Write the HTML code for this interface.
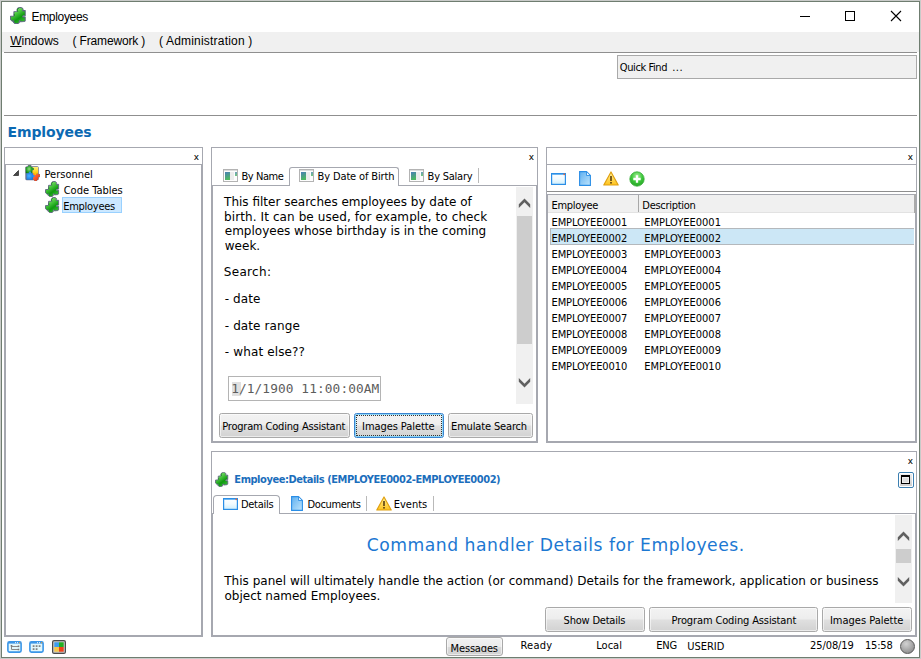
<!DOCTYPE html>
<html>
<head>
<meta charset="utf-8">
<title>Employees</title>
<style>
*{box-sizing:border-box;margin:0;padding:0}
html,body{width:921px;height:659px;overflow:hidden;background:#fff}
body{font-family:"DejaVu Sans Condensed","DejaVu Sans","Liberation Sans",sans-serif;font-stretch:condensed;font-size:11px;color:#000;position:relative}
.a{position:absolute}
.t{position:absolute;white-space:nowrap;line-height:14px}
.ui{font-family:"Liberation Sans",sans-serif;font-stretch:normal;font-size:12px}
.vd{font-family:"DejaVu Sans","Liberation Sans",sans-serif;font-stretch:normal;font-size:12px;line-height:15px}
.mono{font-family:"DejaVu Sans Mono","Liberation Mono",monospace;font-stretch:normal}
.btn{position:absolute;border:1px solid #a9a9a9;border-radius:2.5px;box-shadow:inset 0 0 0 1px rgba(255,255,255,.55);background:linear-gradient(#f3f3f3 0%,#ededed 46%,#dfdfdf 54%,#d2d2d2 100%);height:25px}
.panel{position:absolute;border:1px solid #a6a8b0;background:#fff}
.x{position:absolute;font-family:"Liberation Sans",sans-serif;font-stretch:normal;font-size:9.5px;line-height:10px;color:#000;-webkit-text-stroke:.1px #000}
.sb{position:absolute;background:#f0f0f0}
.sep{position:absolute;width:1px;background:#b9b9b9}
</style>
</head>
<body>

<div class="a" style="left:0;top:0;width:921px;height:659px;border:1px solid #c9cbc9"></div>
<div class="a" style="left:1px;top:1px;width:919px;height:657px;border:1px solid #6f7d70"></div>

<svg class="a" style="left:9.7px;top:7.4px" width="17.9" height="17.1" viewBox="0 0 16 16" preserveAspectRatio="none"><defs><linearGradient id="g1" x1="0.200" y1="0" x2="0.800" y2="1"><stop offset="0" stop-color="#a5e898"/><stop offset=".35" stop-color="#4cc840"/><stop offset=".65" stop-color="#0f9a10"/><stop offset="1" stop-color="#3cc038"/></linearGradient></defs><path d="M3.500 4.400L6.900 4.100C6 3.200 5.900 .6 9 .5C12.100 .4 12 3 11.200 3.600L13.600 3.300V8.100L11.700 8.300C11.200 8.700 11.300 9.400 11.800 9.400L13.600 9.300V12.900L12.800 13.500L9.400 13.900L8.900 12.700L8.200 13.200L8.300 14.600L7 15.500L4.500 15.600L3.100 14.200L3.500 12.900L2.300 13.400L.5 11.700L.5 8.600L3.500 8.400Z" fill="url(#g1)" stroke="#5d6480" stroke-width=".9" stroke-linejoin="round"/><path d="M6.900 4.300C6.300 3 6.600 1.600 7.800 1.200" stroke="#0d8a10" stroke-width=".8" fill="none"/><path d="M3.900 8.300V6.500" stroke="#1a8a1a" stroke-width=".8"/></svg>
<span class="t ui" style="left:31.50px;top:9.80px;letter-spacing:-0.315px;">Employees</span>
<div class="a" style="left:800px;top:16px;width:10px;height:1px;background:#000"></div>
<div class="a" style="left:845px;top:11px;width:10px;height:10px;border:1px solid #000"></div>
<svg class="a" style="left:890px;top:10px" width="12" height="12" viewBox="0 0 12 12"><path d="M1 1L11 11M11 1L1 11" stroke="#000" stroke-width="1.100" fill="none"/></svg>

<div class="a" style="left:2px;top:32px;width:917px;height:20px;background:#f0f0f0"></div>
<span class="t ui" style="left:10.20px;top:33.90px;"><u>W</u>indows</span>
<span class="t ui" style="left:72.60px;top:33.90px;letter-spacing:-0.172px;">( Framework )</span>
<span class="t ui" style="left:158.91px;top:33.90px;letter-spacing:0.201px;">( Administration )</span>
<div class="a" style="left:4px;top:52px;width:913px;height:1px;background:#8f8f8f"></div>
<div class="a" style="left:617px;top:55px;width:300px;height:24px;background:#f0f0f0;border:1px solid #a9a9a9"></div>
<span class="t " style="left:619.80px;top:60.60px;letter-spacing:-0.400px;">Quick Find</span>
<span class="t " style="left:672.16px;top:60.60px;letter-spacing:0.540px;">...</span>
<div class="a" style="left:4px;top:115px;width:913px;height:1px;background:#8f8f8f"></div>
<span class="t " style="left:7.48px;top:122.71px;letter-spacing:-0.101px;font-family:'DejaVu Sans','Liberation Sans',sans-serif;font-stretch:normal;font-size:14px;line-height:18px;font-weight:bold;color:#0b69b3">Employees</span>
<div class="panel" style="left:4px;top:147px;width:199px;height:490px"></div>
<div class="a" style="left:5px;top:164px;width:197px;height:472px;border:1px solid #a6a8b0"></div>
<span class="x" style="left:194px;top:151.500px">x</span>
<svg class="a" style="left:11.500px;top:169px" width="8" height="8" viewBox="0 0 8 8"><path d="M6.500 1.500V6.500H1.500Z" fill="#484848" stroke="#333" stroke-width=".8"/></svg>

<svg class="a" style="left:25px;top:165px" width="15" height="16" viewBox="0 0 16 17"><defs>
<radialGradient id="pg1" cx=".5" cy=".45" r=".6"><stop offset="0" stop-color="#8fe080"/><stop offset=".6" stop-color="#2fa82f"/><stop offset="1" stop-color="#0b7a12"/></radialGradient>
<linearGradient id="pg2" x1="0" y1="0" x2="0" y2="1"><stop offset="0" stop-color="#fff27a"/><stop offset="1" stop-color="#ffc400"/></linearGradient>
<radialGradient id="pg3" cx=".4" cy=".4" r=".7"><stop offset="0" stop-color="#49b0ff"/><stop offset="1" stop-color="#1677dd"/></radialGradient>
<linearGradient id="pg4" x1="0" y1="0" x2="1" y2="1"><stop offset="0" stop-color="#ff7a4a"/><stop offset="1" stop-color="#f22c06"/></linearGradient></defs>
<g stroke="#6c6f8c" stroke-width="1.300" stroke-linejoin="round" fill="#6c6f8c"><rect x="1" y="2" width="13" height="13.600" rx="1"/><circle cx="4.800" cy="1.700" r="1.600"/><circle cx="14.600" cy="11.300" r="1.300"/><circle cx="11.300" cy="15.600" r="1.100"/></g>
<path d="M.8 2H3.200A1.600 1.600 0 1 1 6.400 2H8V8.800H.8Z" fill="url(#pg1)"/>
<path d="M8 2H14V9.300H8V5.600A1.300 1.300 0 0 0 8 3Z" fill="url(#pg2)"/>
<circle cx="8.200" cy="4.300" r="1.300" fill="#2a9a2c"/>
<circle cx="11" cy="9.500" r="1.400" fill="#ffc400"/>
<path d="M1.600 8.800H8.600V15.600H1.600Z" fill="url(#pg3)"/>
<circle cx="5.400" cy="8.400" r="1.400" fill="#2a8df0"/>
<path d="M8.600 9.300H9.600A1.400 1.400 0 0 0 12.400 9.300H14V10.200A1.300 1.300 0 1 1 14 12.400V15.600H12.300A1.100 1.100 0 1 1 10.300 15.600H8.600V13A1.300 1.300 0 0 0 8.600 10.600Z" fill="url(#pg4)"/>
<circle cx="9" cy="11.800" r="1.200" fill="#2b94f2"/>
</svg>
<span class="t " style="left:44.50px;top:168.00px;">Personnel</span>
<svg class="a" style="left:45px;top:181px" width="16" height="16" viewBox="0 0 16 16" preserveAspectRatio="none"><defs><linearGradient id="g2" x1="0.200" y1="0" x2="0.800" y2="1"><stop offset="0" stop-color="#a5e898"/><stop offset=".35" stop-color="#4cc840"/><stop offset=".65" stop-color="#0f9a10"/><stop offset="1" stop-color="#3cc038"/></linearGradient></defs><path d="M3.500 4.400L6.900 4.100C6 3.200 5.900 .6 9 .5C12.100 .4 12 3 11.200 3.600L13.600 3.300V8.100L11.700 8.300C11.200 8.700 11.300 9.400 11.800 9.400L13.600 9.300V12.900L12.800 13.500L9.400 13.900L8.900 12.700L8.200 13.200L8.300 14.600L7 15.500L4.500 15.600L3.100 14.200L3.500 12.900L2.300 13.400L.5 11.700L.5 8.600L3.500 8.400Z" fill="url(#g2)" stroke="#5d6480" stroke-width=".9" stroke-linejoin="round"/><path d="M6.900 4.300C6.300 3 6.600 1.600 7.800 1.200" stroke="#0d8a10" stroke-width=".8" fill="none"/><path d="M3.900 8.300V6.500" stroke="#1a8a1a" stroke-width=".8"/></svg>
<span class="t " style="left:63.70px;top:184.00px;">Code Tables</span>
<svg class="a" style="left:45px;top:197px" width="16" height="16" viewBox="0 0 16 16" preserveAspectRatio="none"><defs><linearGradient id="g3" x1="0.200" y1="0" x2="0.800" y2="1"><stop offset="0" stop-color="#a5e898"/><stop offset=".35" stop-color="#4cc840"/><stop offset=".65" stop-color="#0f9a10"/><stop offset="1" stop-color="#3cc038"/></linearGradient></defs><path d="M3.500 4.400L6.900 4.100C6 3.200 5.900 .6 9 .5C12.100 .4 12 3 11.200 3.600L13.600 3.300V8.100L11.700 8.300C11.200 8.700 11.300 9.400 11.800 9.400L13.600 9.300V12.900L12.800 13.500L9.400 13.900L8.900 12.700L8.200 13.200L8.300 14.600L7 15.500L4.500 15.600L3.100 14.200L3.500 12.900L2.300 13.400L.5 11.700L.5 8.600L3.500 8.400Z" fill="url(#g3)" stroke="#5d6480" stroke-width=".9" stroke-linejoin="round"/><path d="M6.900 4.300C6.300 3 6.600 1.600 7.800 1.200" stroke="#0d8a10" stroke-width=".8" fill="none"/><path d="M3.900 8.300V6.500" stroke="#1a8a1a" stroke-width=".8"/></svg>
<div class="a" style="left:62px;top:197px;width:60px;height:16px;background:#cce8ff;border:1px solid #99d1ff"></div>
<span class="t " style="left:63.16px;top:200.00px;letter-spacing:-0.259px;">Employees</span>
<div class="panel" style="left:211px;top:147px;width:327px;height:296px"></div>
<span class="x" style="left:529px;top:151.500px">x</span>
<div class="a" style="left:212px;top:185px;width:325px;height:257px;border:1px solid #a6a8b0;background:#fff"></div>
<div class="a" style="left:289px;top:167px;width:110px;height:19px;border:1px solid #a6a8b0;border-bottom:none;background:#fff;border-radius:3px 3px 0 0"></div>
<svg class="a" style="left:223px;top:169px" width="15" height="13" viewBox="0 0 15 13"><defs><linearGradient id="tg1" x1="0" y1="0" x2="0.300" y2="1"><stop offset="0" stop-color="#4a7db8"/><stop offset="1" stop-color="#4db860"/></linearGradient></defs><rect x=".5" y=".5" width="14" height="12" fill="#fdfdfd" stroke="#b3b3b3"/><rect x="1" y="1" width="13" height="1" fill="#dcdcdc"/><rect x="2" y="3" width="5" height="8" fill="url(#tg1)"/><rect x="7" y="3" width="4" height="8" fill="#ececec"/><rect x="12" y="3" width="2" height="4" fill="url(#tg1)" opacity=".8"/></svg>
<span class="t " style="left:241.50px;top:169.80px;letter-spacing:-0.435px;">By Name</span>
<svg class="a" style="left:299px;top:169px" width="15" height="13" viewBox="0 0 15 13"><defs><linearGradient id="tg2" x1="0" y1="0" x2="0.300" y2="1"><stop offset="0" stop-color="#4a7db8"/><stop offset="1" stop-color="#4db860"/></linearGradient></defs><rect x=".5" y=".5" width="14" height="12" fill="#fdfdfd" stroke="#b3b3b3"/><rect x="1" y="1" width="13" height="1" fill="#dcdcdc"/><rect x="2" y="3" width="5" height="8" fill="url(#tg2)"/><rect x="7" y="3" width="4" height="8" fill="#ececec"/><rect x="12" y="3" width="2" height="4" fill="url(#tg2)" opacity=".8"/></svg>
<span class="t " style="left:317.60px;top:169.80px;letter-spacing:-0.138px;">By Date of Birth</span>
<svg class="a" style="left:409px;top:169px" width="15" height="13" viewBox="0 0 15 13"><defs><linearGradient id="tg3" x1="0" y1="0" x2="0.300" y2="1"><stop offset="0" stop-color="#4a7db8"/><stop offset="1" stop-color="#4db860"/></linearGradient></defs><rect x=".5" y=".5" width="14" height="12" fill="#fdfdfd" stroke="#b3b3b3"/><rect x="1" y="1" width="13" height="1" fill="#dcdcdc"/><rect x="2" y="3" width="5" height="8" fill="url(#tg3)"/><rect x="7" y="3" width="4" height="8" fill="#ececec"/><rect x="12" y="3" width="2" height="4" fill="url(#tg3)" opacity=".8"/></svg>
<span class="t " style="left:427.60px;top:169.80px;letter-spacing:-0.236px;">By Salary</span>
<div class="sep" style="left:478px;top:168px;height:15px"></div>
<span class="t vd" style="left:224.10px;top:195.00px;">This filter searches employees by date of</span>
<span class="t vd" style="left:224.10px;top:210.00px;letter-spacing:0.092px;">birth. It can be used, for example, to check</span>
<span class="t vd" style="left:224.80px;top:224.00px;">employees whose birthday is in the coming</span>
<span class="t vd" style="left:224.80px;top:239.00px;">week.</span>
<span class="t vd" style="left:223.72px;top:264.50px;letter-spacing:0.330px;">Search:</span>
<span class="t vd" style="left:224.80px;top:292.00px;letter-spacing:0.072px;">- date</span>
<span class="t vd" style="left:224.80px;top:319.00px;letter-spacing:0.098px;">- date range</span>
<span class="t vd" style="left:224.80px;top:345.00px;letter-spacing:0.134px;">- what else??</span>
<div class="sb" style="left:516px;top:187px;width:17px;height:217px"></div>
<div class="a" style="left:517px;top:216px;width:15px;height:128px;background:#cdcdcd"></div>
<svg class="a" style="left:516px;top:197px" width="17" height="12" viewBox="0 0 17 12"><path d="M2.800 7.300L8.500 1.600L14.200 7.300V10.900L8.500 5.200L2.800 10.900Z" fill="#606060"/></svg>
<svg class="a" style="left:516px;top:377px" width="17" height="12" viewBox="0 0 17 12"><path d="M2.800 4.700L8.500 10.400L14.200 4.700V1.100L8.500 6.800L2.800 1.100Z" fill="#606060"/></svg>
<div class="a" style="left:228px;top:376px;width:153px;height:25px;border:1px solid #b4b4b4;background:#fff"></div>
<div class="a" style="left:232px;top:381.500px;width:8.500px;height:14.500px;background:#e0e0e0"></div>
<span class="t mono" style="left:231.14px;top:381.00px;letter-spacing:0.100px;font-size:12.8px;line-height:15px;color:#5c5c5c">1/1/1900 11:00:00AM</span>
<div class="btn" style="left:219px;top:413px;width:131px;"></div>
<span class="t " style="left:222.16px;top:420.00px;letter-spacing:-0.188px;">Program Coding Assistant</span>
<div class="btn" style="left:354px;top:413px;width:90px;border-color:#3a84d0;box-shadow:inset 0 0 0 1px #8ed6f8;"></div>
<div class="a" style="left:356px;top:415px;width:86px;height:21px;border:1px dotted #333"></div>
<span class="t " style="left:362.10px;top:420.00px;letter-spacing:-0.076px;">Images Palette</span>
<div class="btn" style="left:448px;top:413px;width:85px;"></div>
<span class="t " style="left:451.04px;top:420.00px;letter-spacing:-0.153px;">Emulate Search</span>
<div class="panel" style="left:546px;top:147px;width:371px;height:296px"></div>
<span class="x" style="left:908px;top:151.500px">x</span>
<div class="a" style="left:547px;top:164px;width:369px;height:1px;background:#a6a8b0"></div>
<div class="a" style="left:547px;top:191px;width:369px;height:1px;background:#8e8e8e"></div>
<svg class="a" style="left:551px;top:173px" width="15" height="12" viewBox="0 0 15 12"><defs><linearGradient id="dg1" x1="0" y1="0" x2="0" y2="1"><stop offset="0" stop-color="#ffffff"/><stop offset=".5" stop-color="#f2fbff"/><stop offset="1" stop-color="#cdeefd"/></linearGradient></defs><rect x=".6" y=".6" width="13.800" height="10.800" fill="url(#dg1)" stroke="#2b8ee6" stroke-width="1.200"/><rect x="1" y="1" width="13" height="1" fill="#6db6f2"/><rect x="12.500" y=".6" width="1.500" height="1.500" fill="#e8663a"/></svg>
<svg class="a" style="left:579px;top:170.7px" width="12" height="15" viewBox="0 0 12 15"><defs><linearGradient id="og2" x1="0" y1="0" x2="1" y2="1"><stop offset="0" stop-color="#5fb0f0"/><stop offset="1" stop-color="#bfe4fc"/></linearGradient></defs><path d="M.6 .6H7.500L11.400 4.500V14.400H.6Z" fill="url(#og2)" stroke="#2b8ee6" stroke-width="1.100"/><path d="M7.500 .6V4.500H11.400Z" fill="#e9f5fe" stroke="#2b8ee6" stroke-width=".9" stroke-linejoin="round"/></svg>
<svg class="a" style="left:603px;top:171px" width="16" height="15" viewBox="0 0 16 15"><defs><linearGradient id="eg3" x1="0" y1="0" x2="0" y2="1"><stop offset="0" stop-color="#fff3a0"/><stop offset="1" stop-color="#ffc21a"/></linearGradient></defs><path d="M8 1L15.200 14H.8Z" fill="url(#eg3)" stroke="#e0a010" stroke-width="1.200" stroke-linejoin="round"/><rect x="7.200" y="5" width="1.600" height="5" fill="#5a3d10"/><rect x="7.200" y="11" width="1.600" height="1.600" fill="#5a3d10"/></svg>
<svg class="a" style="left:629px;top:171px" width="16" height="16" viewBox="0 0 16 16"><defs><radialGradient id="plg" cx=".5" cy=".3" r=".7"><stop offset="0" stop-color="#a8f09a"/><stop offset=".55" stop-color="#3cc63a"/><stop offset="1" stop-color="#27a427"/></radialGradient></defs><circle cx="8" cy="8" r="7.200" fill="url(#plg)" stroke="#3cb03c" stroke-width=".8"/><path d="M8 4.300V11.700M4.300 8H11.700" stroke="#fff" stroke-width="2.300"/></svg>
<div class="a" style="left:547px;top:194px;width:369px;height:248px;border:1px solid #a6a8b0;background:#fff"></div>
<div class="a" style="left:548px;top:195px;width:366px;height:17px;background:#f0f0f0"></div>
<div class="a" style="left:548px;top:212px;width:366px;height:1px;background:#e2e2e2"></div>
<div class="a" style="left:638px;top:195px;width:1px;height:17px;background:#a8a8a8"></div>
<div class="a" style="left:914px;top:194px;width:2px;height:19px;background:#aaaaaa"></div>
<span class="t " style="left:551.50px;top:198.60px;letter-spacing:-0.321px;">Employee</span>
<span class="t " style="left:642.32px;top:198.60px;letter-spacing:-0.288px;">Description</span>
<div class="a" style="left:550px;top:228px;width:364px;height:17px;background:#cce7f6;border:1px solid #b4b8bc;border-right:none"></div>
<span class="t " style="left:551.50px;top:215.50px;letter-spacing:-0.098px;">EMPLOYEE0001</span>
<span class="t " style="left:644.16px;top:215.50px;">EMPLOYEE0001</span>
<span class="t " style="left:551.50px;top:231.50px;letter-spacing:-0.098px;">EMPLOYEE0002</span>
<span class="t " style="left:644.16px;top:231.50px;">EMPLOYEE0002</span>
<span class="t " style="left:551.50px;top:247.50px;letter-spacing:-0.098px;">EMPLOYEE0003</span>
<span class="t " style="left:644.16px;top:247.50px;">EMPLOYEE0003</span>
<span class="t " style="left:551.50px;top:263.50px;letter-spacing:-0.098px;">EMPLOYEE0004</span>
<span class="t " style="left:644.16px;top:263.50px;">EMPLOYEE0004</span>
<span class="t " style="left:551.50px;top:279.50px;letter-spacing:-0.098px;">EMPLOYEE0005</span>
<span class="t " style="left:644.16px;top:279.50px;">EMPLOYEE0005</span>
<span class="t " style="left:551.50px;top:295.50px;letter-spacing:-0.098px;">EMPLOYEE0006</span>
<span class="t " style="left:644.16px;top:295.50px;">EMPLOYEE0006</span>
<span class="t " style="left:551.50px;top:311.50px;letter-spacing:-0.098px;">EMPLOYEE0007</span>
<span class="t " style="left:644.16px;top:311.50px;">EMPLOYEE0007</span>
<span class="t " style="left:551.50px;top:327.50px;letter-spacing:-0.098px;">EMPLOYEE0008</span>
<span class="t " style="left:644.16px;top:327.50px;">EMPLOYEE0008</span>
<span class="t " style="left:551.50px;top:343.50px;letter-spacing:-0.098px;">EMPLOYEE0009</span>
<span class="t " style="left:644.16px;top:343.50px;">EMPLOYEE0009</span>
<span class="t " style="left:551.50px;top:359.50px;letter-spacing:-0.098px;">EMPLOYEE0010</span>
<span class="t " style="left:644.16px;top:359.50px;">EMPLOYEE0010</span>
<div class="panel" style="left:211px;top:451px;width:706px;height:186px"></div>
<span class="x" style="left:908px;top:455.500px">x</span>
<svg class="a" style="left:215px;top:472px" width="15" height="15" viewBox="0 0 16 16" preserveAspectRatio="none"><defs><linearGradient id="g4" x1="0.200" y1="0" x2="0.800" y2="1"><stop offset="0" stop-color="#a5e898"/><stop offset=".35" stop-color="#4cc840"/><stop offset=".65" stop-color="#0f9a10"/><stop offset="1" stop-color="#3cc038"/></linearGradient></defs><path d="M3.500 4.400L6.900 4.100C6 3.200 5.900 .6 9 .5C12.100 .4 12 3 11.200 3.600L13.600 3.300V8.100L11.700 8.300C11.200 8.700 11.300 9.400 11.800 9.400L13.600 9.300V12.900L12.800 13.500L9.400 13.900L8.900 12.700L8.200 13.200L8.300 14.600L7 15.500L4.500 15.600L3.100 14.200L3.500 12.900L2.300 13.400L.5 11.700L.5 8.600L3.500 8.400Z" fill="url(#g4)" stroke="#5d6480" stroke-width=".9" stroke-linejoin="round"/><path d="M6.900 4.300C6.300 3 6.600 1.600 7.800 1.200" stroke="#0d8a10" stroke-width=".8" fill="none"/><path d="M3.900 8.300V6.500" stroke="#1a8a1a" stroke-width=".8"/></svg>
<span class="t " style="left:234.34px;top:473.00px;letter-spacing:-0.455px;font-weight:bold;color:#1b6ebc">Employee:Details (EMPLOYEE0002-EMPLOYEE0002)</span>
<div class="a" style="left:898px;top:472px;width:16px;height:16px;border:1px solid #3c7fb1;border-radius:2px;background:#fff"></div><div class="a" style="left:900px;top:474px;width:12px;height:12px;background:linear-gradient(#ececec,#cfcfcf)"></div><div class="a" style="left:901px;top:475px;width:9px;height:9px;border:1px solid #000;border-top-width:2px;background:#dcdcdc;box-shadow:inset 0 0 0 1px #ededed"></div>
<div class="a" style="left:212px;top:513px;width:704px;height:123px;border:1px solid #a6a8b0;background:#fff"></div>
<div class="a" style="left:213px;top:495px;width:67px;height:19px;border:1px solid #a6a8b0;border-bottom:none;background:#fff;border-radius:4px 4px 0 0"></div>
<svg class="a" style="left:223px;top:498px" width="15" height="12" viewBox="0 0 15 12"><defs><linearGradient id="dg4" x1="0" y1="0" x2="0" y2="1"><stop offset="0" stop-color="#ffffff"/><stop offset=".5" stop-color="#f2fbff"/><stop offset="1" stop-color="#cdeefd"/></linearGradient></defs><rect x=".6" y=".6" width="13.800" height="10.800" fill="url(#dg4)" stroke="#2b8ee6" stroke-width="1.200"/><rect x="1" y="1" width="13" height="1" fill="#6db6f2"/><rect x="12.500" y=".6" width="1.500" height="1.500" fill="#e8663a"/></svg>
<span class="t " style="left:240.91px;top:497.71px;letter-spacing:-0.270px;">Details</span>
<svg class="a" style="left:291px;top:496px" width="12" height="15" viewBox="0 0 12 15"><defs><linearGradient id="og5" x1="0" y1="0" x2="1" y2="1"><stop offset="0" stop-color="#5fb0f0"/><stop offset="1" stop-color="#bfe4fc"/></linearGradient></defs><path d="M.6 .6H7.500L11.400 4.500V14.400H.6Z" fill="url(#og5)" stroke="#2b8ee6" stroke-width="1.100"/><path d="M7.500 .6V4.500H11.400Z" fill="#e9f5fe" stroke="#2b8ee6" stroke-width=".9" stroke-linejoin="round"/></svg>
<span class="t " style="left:307.60px;top:497.71px;letter-spacing:-0.383px;">Documents</span>
<svg class="a" style="left:376px;top:496px" width="16" height="15" viewBox="0 0 16 15"><defs><linearGradient id="eg6" x1="0" y1="0" x2="0" y2="1"><stop offset="0" stop-color="#fff3a0"/><stop offset="1" stop-color="#ffc21a"/></linearGradient></defs><path d="M8 1L15.200 14H.8Z" fill="url(#eg6)" stroke="#e0a010" stroke-width="1.200" stroke-linejoin="round"/><rect x="7.200" y="5" width="1.600" height="5" fill="#5a3d10"/><rect x="7.200" y="11" width="1.600" height="1.600" fill="#5a3d10"/></svg>
<span class="t " style="left:393.72px;top:497.71px;">Events</span>
<div class="sep" style="left:366px;top:496px;height:15px"></div>
<div class="sep" style="left:433px;top:496px;height:15px"></div>
<span class="t vd" style="left:366.72px;top:533.80px;letter-spacing:0.511px;font-size:17.2px;line-height:22px;color:#1c78d2">Command handler Details for Employees.</span>
<span class="t vd" style="left:224.20px;top:574.00px;letter-spacing:0.026px;">This panel will ultimately handle the action (or command) Details for the framework, application or business</span>
<span class="t vd" style="left:224.50px;top:589.00px;">object named Employees.</span>
<div class="sb" style="left:895px;top:515px;width:17px;height:88px"></div>
<div class="a" style="left:896px;top:549px;width:15px;height:14px;background:#cdcdcd"></div>
<svg class="a" style="left:895px;top:530px" width="17" height="12" viewBox="0 0 17 12"><path d="M2.800 7.300L8.500 1.600L14.200 7.300V10.900L8.500 5.200L2.800 10.900Z" fill="#606060"/></svg>
<svg class="a" style="left:895px;top:576px" width="17" height="12" viewBox="0 0 17 12"><path d="M2.800 4.700L8.500 10.400L14.200 4.700V1.100L8.500 6.800L2.800 1.100Z" fill="#606060"/></svg>
<div class="btn" style="left:545px;top:607px;width:100px;"></div>
<span class="t " style="left:563.60px;top:614.00px;letter-spacing:-0.212px;">Show Details</span>
<div class="btn" style="left:649px;top:607px;width:169px;"></div>
<span class="t " style="left:671.60px;top:614.00px;letter-spacing:-0.129px;">Program Coding Assistant</span>
<div class="btn" style="left:822px;top:607px;width:90px;"></div>
<span class="t " style="left:829.91px;top:614.00px;">Images Palette</span>
<div class="btn" style="left:446px;top:637px;width:57px;height:19px;border-radius:3px;background:linear-gradient(#f2f2f2 0%,#ebebeb 50%,#dadada 56%,#d2d2d2 100%)"></div>
<div class="a" style="left:446px;top:638px;width:60px;height:14px;overflow:hidden"><span class="t " style="left:4.60px;top:3.80px;letter-spacing:-0.167px;">Messages</span></div>
<span class="t " style="left:520.48px;top:638.90px;letter-spacing:0.247px;">Ready</span>
<span class="t " style="left:596.29px;top:638.90px;">Local</span>
<span class="t " style="left:656.16px;top:638.90px;letter-spacing:-0.180px;">ENG</span>
<span class="t " style="left:687.16px;top:640.00px;">USERID</span>
<span class="t " style="left:810.10px;top:638.90px;letter-spacing:-0.103px;">25/08/19</span>
<span class="t " style="left:864.88px;top:638.90px;letter-spacing:-0.156px;">15:58</span>
<div class="a" style="left:900px;top:639px;width:15px;height:15px;border-radius:50%;border:1px solid #585858;background:radial-gradient(circle at 40% 30%,#d2d2d2 0%,#b2b2b2 40%,#8e8e8e 80%,#7a7a7a 100%)"></div>
<svg class="a" style="left:7px;top:641px" width="15" height="12" viewBox="0 0 15 12"><rect x=".9" y=".9" width="13.200" height="10.200" rx="1.500" fill="#e2f7fc" stroke="#3a96e8" stroke-width="1.600"/><rect x="1" y="1" width="13" height="1.600" fill="#3a96e8"/><rect x="8" y="1.200" width="1" height="1" fill="#fff"/><rect x="10" y="1.200" width="1" height="1" fill="#fff"/><rect x="12" y="1.200" width="1.200" height="1" fill="#f0a030"/><path d="M4.500 4.500V8.500H11.500M4.500 5.500H11.500" stroke="#8a8a8a" stroke-width="1" fill="none"/><rect x="3.700" y="4" width="1.600" height="1.600" fill="#777"/><rect x="10.700" y="4.500" width="1.600" height="1.600" fill="#777"/><rect x="10.700" y="7.700" width="1.600" height="1.600" fill="#777"/></svg>
<svg class="a" style="left:29px;top:641px" width="15" height="12" viewBox="0 0 15 12"><rect x=".9" y=".9" width="13.200" height="10.200" rx="1.500" fill="#e2f7fc" stroke="#3a96e8" stroke-width="1.600"/><rect x="1" y="1" width="13" height="1.600" fill="#3a96e8"/><rect x="8" y="1.200" width="1" height="1" fill="#fff"/><rect x="10" y="1.200" width="1" height="1" fill="#fff"/><rect x="12" y="1.200" width="1.200" height="1" fill="#f0a030"/><g fill="#777"><rect x="3.700" y="4.300" width="1.800" height="1.600"/><rect x="6.700" y="4.300" width="1.800" height="1.600"/><rect x="9.700" y="4.300" width="1.800" height="1.600"/><rect x="3.700" y="7.300" width="1.800" height="1.600"/><rect x="6.700" y="7.300" width="1.800" height="1.600"/></g></svg>
<svg class="a" style="left:52px;top:640px" width="14" height="14" viewBox="0 0 14 14"><rect x=".6" y=".6" width="12.800" height="12.800" rx="1.500" fill="#c8c8c8" stroke="#4a4a4a" stroke-width="1.200"/><rect x="2.300" y="2.300" width="4.700" height="4.700" fill="#3d9df0"/><rect x="7" y="2.300" width="4.700" height="4.700" fill="#22b022"/><rect x="2.300" y="7" width="4.700" height="4.700" fill="#f6c64a"/><rect x="7" y="7" width="4.700" height="4.700" fill="#f0401a"/></svg>

</body>
</html>
